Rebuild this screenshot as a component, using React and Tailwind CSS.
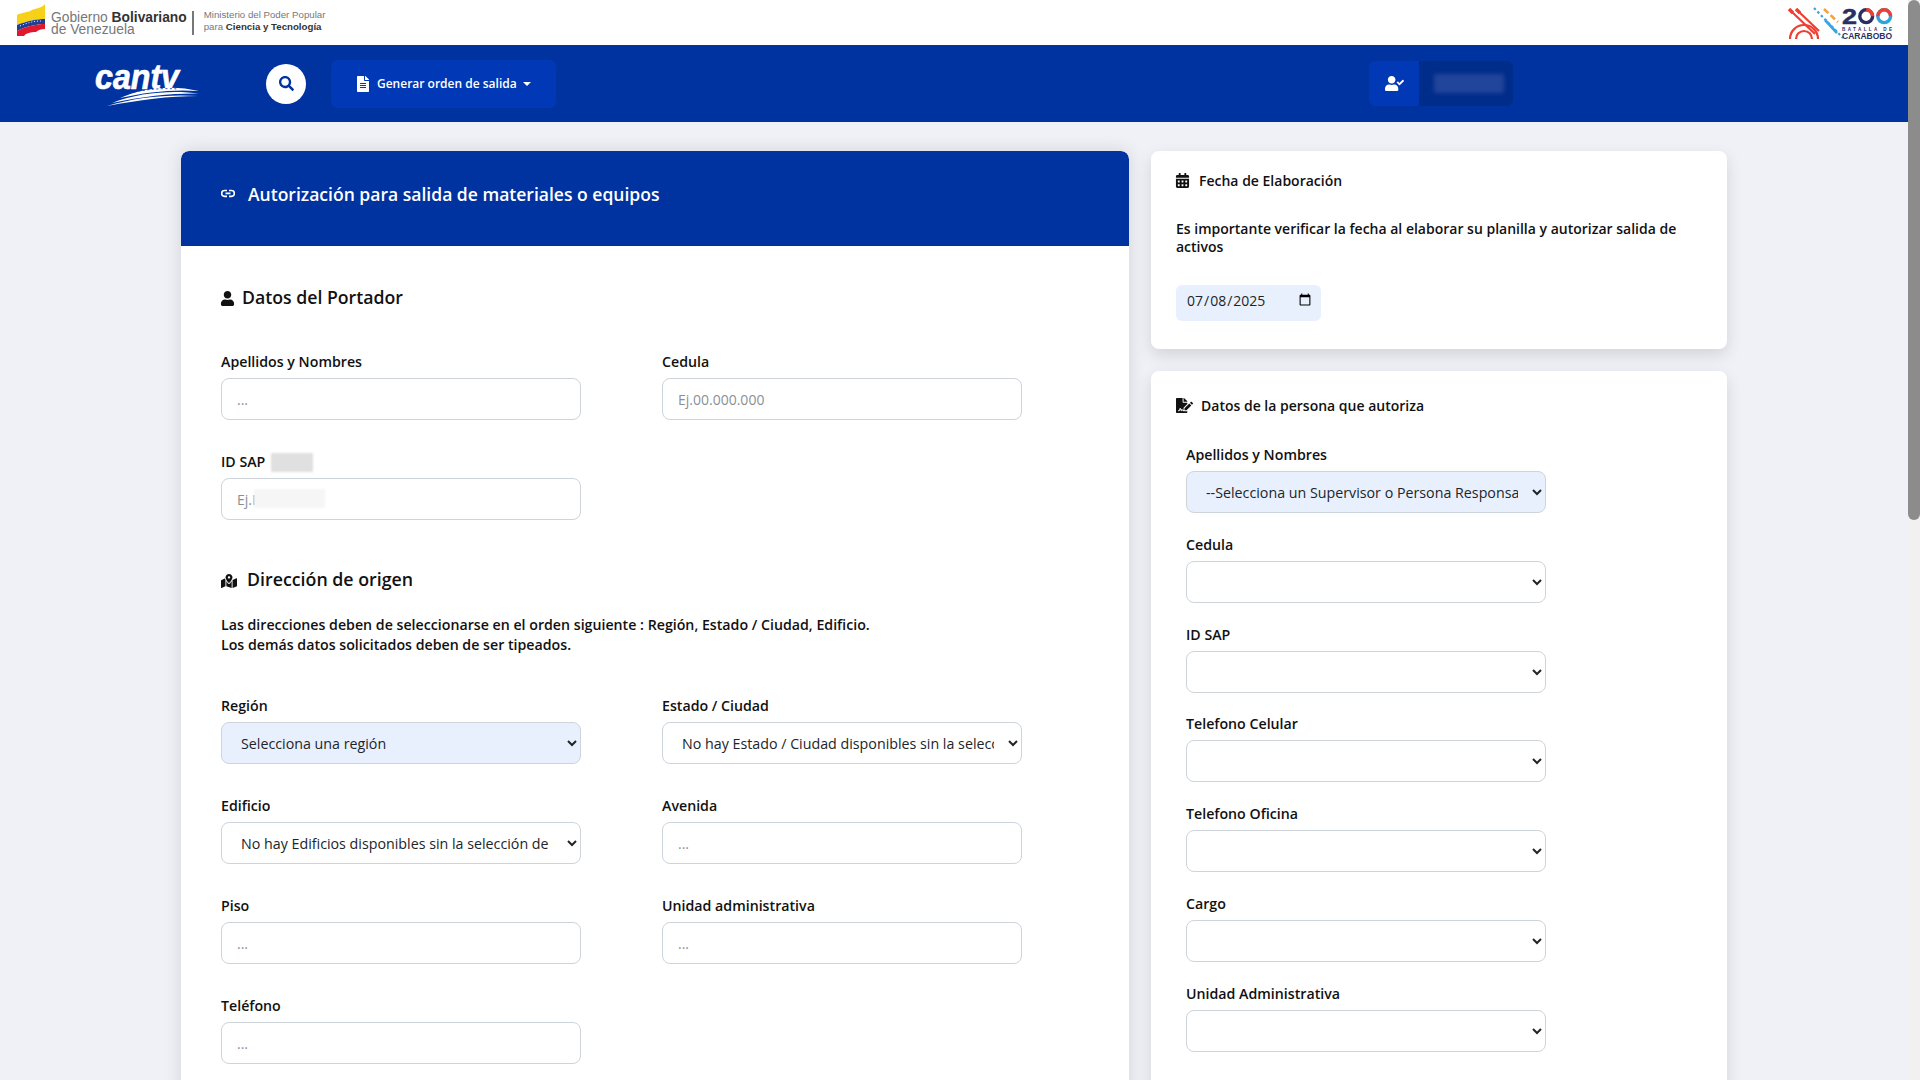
import React from "react";
import { FaCalendarAlt, FaFileAlt, FaFileSignature, FaMapMarkedAlt, FaSearch, FaUser, FaUserCheck } from "react-icons/fa";

const FONT = "font-['Open_Sans','Noto_Sans',sans-serif]";

function Label({ children }) {
  return <label className="block text-[14.200px] leading-[21px] font-semibold text-[#111] mb-[6px]">{children}</label>;
}

function TextField({ label, placeholder }) {
  return (
    <div className="w-[360px]">
      <Label>{label}</Label>
      <input readOnly placeholder={placeholder} className="block w-full h-[42px] px-[15px] rounded-[8px] border border-[#ced4da] bg-white text-[14px] text-[#333] placeholder:text-[#8a8f96] outline-none" />
    </div>
  );
}

function SelectField({ label, value, tinted }) {
  return (
    <div className="w-[360px]">
      <Label>{label}</Label>
      <select className={`block w-full h-[42px] pl-[15px] pr-[11px] rounded-[8px] border border-[#ced4da] text-[14.250px] text-[#212529] outline-none ${tinted ? "bg-[#e8f0fe]" : "bg-white"}`} style={{ appearance: "auto" }}>
        <option>{value ?? ""}</option>
      </select>
    </div>
  );
}

function GovLogo() {
  return (
    <div className="flex items-center">
      <svg width="29" height="33" viewBox="0 0 29 33" className="shrink-0 mb-[5px]">
        <path d="M0 11 C5 8 10 9 15 6 C20 4 25 4 28 0 L28 15 C20 15 10 17 0 21Z" fill="#f7d117" />
        <path d="M0 21 C10 17 20 15 28 15 L28 20 C20 20 10 22 0 27Z" fill="#1f3f93" />
        <path d="M0 27 C10 22 20 20 28 20 L28 25 C24 25 21 26 19 28 C14 28 9 29 7 32 L0 32Z" fill="#e0182d" />
        <path d="M3 22 C10 19 16 17 24 17" fill="none" stroke="#fff" strokeWidth="1" strokeDasharray="1 2" />
      </svg>
      <div className="ml-[5px] font-['Liberation_Sans',sans-serif] text-[13.800px] leading-[12px] text-[#777] whitespace-nowrap pt-[3px]">
        <div>Gobierno <b className="text-[#333]">Bolivariano</b></div>
        <div>de Venezuela</div>
      </div>
      <div className="ml-[5px] w-[2px] h-[24px] bg-[#777] shrink-0" />
      <div className="ml-[10px] mb-[3px] font-['Liberation_Sans',sans-serif] text-[9.700px] leading-[12.400px] text-[#777] whitespace-nowrap">
        <div>Ministerio del Poder Popular</div>
        <div>para <b className="text-[#333]">Ciencia y Tecnología</b></div>
      </div>
    </div>
  );
}

function BicentenarioLogo() {
  return (
    <svg width="106" height="33" viewBox="0 0 106 33" className="overflow-visible">
      <g stroke="#ee3f33" strokeWidth="2.200" fill="none">
        <path d="M3 5 L27 28" />
        <path d="M10 5 L31 25" />
        <path d="M2 33 A14 14 0 0 1 30 33" />
        <path d="M8 33 A8 8 0 0 1 24 33" />
      </g>
      <path d="M1 3 L5 7 M8 3 L12 7" stroke="#ee3f33" strokeWidth="3.400" />
      <path d="M26 2 L55 32" stroke="#3aa4dc" strokeWidth="2.200" strokeDasharray="2.500 2.500" fill="none" />
      <path d="M37 14 L49 27" stroke="#3aa4dc" strokeWidth="2.600" />
      <path d="M36 3 L50 16" stroke="#f4a13a" strokeWidth="2.600" strokeDasharray="6 3" />
      <text x="54" y="18" fontFamily="Liberation Sans" fontWeight="700" fontSize="22" textLength="15" lengthAdjust="spacingAndGlyphs" fill="#2a2f63" stroke="#2a2f63" strokeWidth="0.500">2</text>
      <circle cx="78.200" cy="10.200" r="6.400" fill="none" stroke="#2a2f63" strokeWidth="3.400" />
      <path d="M78.200 3.800 A6.400 6.400 0 0 1 84.600 10.200" fill="none" stroke="#ee3f33" strokeWidth="3.400" />
      <circle cx="96.200" cy="10.200" r="6.400" fill="none" stroke="#2aa6df" strokeWidth="3.400" />
      <path d="M89.800 10.200 A6.400 6.400 0 0 1 102.600 10.200" fill="none" stroke="#ee3f33" strokeWidth="3.400" />
      <text x="54" y="25" fontFamily="Liberation Sans" fontWeight="700" fontSize="4.600" textLength="50" fill="#2a2f63">BATALLA DE</text>
      <text x="54" y="32.500" fontFamily="Liberation Sans" fontWeight="700" fontSize="8.200" textLength="50" lengthAdjust="spacingAndGlyphs" fill="#2a2f63">CARABOBO</text>
    </svg>
  );
}

function CantvLogo() {
  return (
    <svg width="112" height="50" viewBox="0 0 112 50" className="overflow-visible">
      <text x="1" y="29.500" fontFamily="Liberation Sans" fontWeight="700" fontStyle="italic" fontSize="35" textLength="84" lengthAdjust="spacingAndGlyphs" fill="#fff" stroke="#fff" strokeWidth="0.700">cantv</text>
      <path d="M26 39 C50 28 80 26 105 32 C80 30 52 33 26 39Z" fill="#fff" />
      <path d="M18 44 C45 33 80 31 105 34.500 C80 34 50 37 18 44Z" fill="#fff" />
      <path d="M13 47 C42 38 75 35 104 37 C75 37 45 41 13 47Z" fill="#fff" />
      <path d="M40 33 C55 30 70 29 84 30" fill="none" stroke="#00339f" strokeWidth="0.800" strokeDasharray="2 2.500" />
    </svg>
  );
}

export default function App() {
  return (
    <div className={`flex h-screen overflow-hidden bg-[#eff1f6] ${FONT}`}>
      <div className="flex-1 min-w-0 overflow-hidden">
        <header className="h-[45px] bg-white flex items-center justify-between pl-[17px] pr-[14px]">
          <GovLogo />
          <BicentenarioLogo />
        </header>

        <nav className="h-[77px] bg-[#00339f] flex items-center">
          <div className="w-[266px] pl-[94px] flex shrink-0">
            <CantvLogo />
          </div>
          <div className="w-[40px] h-[40px] rounded-full bg-white flex items-center justify-center shrink-0 text-[#00339f]">
            <FaSearch size={15} />
          </div>
          <div className="ml-[25px] w-[225px] h-[48px] rounded-[6px] bg-[#0038b5] flex items-center pl-[24px] text-white text-[12px] font-semibold">
            <FaFileAlt size={16} className="mr-[6px]" />
            <span>Generar orden de salida</span>
            <span className="ml-[6px] w-0 h-0 border-x-[4px] border-x-transparent border-t-[4px] border-t-white" />
          </div>
          <div className="ml-[813px] flex h-[45px] w-[144px] rounded-[6px] overflow-hidden">
            <div className="w-[50px] bg-[#0038b5] flex items-center justify-center text-white">
              <FaUserCheck size={19} />
            </div>
            <div className="flex-1 bg-[#002c8a] flex items-center pl-[15px]">
              <div className="w-[70px] h-[19px] bg-[#21459b] blur-[2px]" />
            </div>
          </div>
        </nav>

        <main className="flex items-start pt-[29px] pl-[181px]">
          <section className="w-[948px] bg-white rounded-[8px] shadow-[0_0_18px_rgba(0,0,0,0.12)] overflow-hidden h-[1200px] shrink-0">
            <div className="h-[95px] bg-[#00339f] rounded-t-[8px] flex items-start pt-[30px] pl-[40px] text-white">
              <svg width="14" height="10" viewBox="0 0 14 10" fill="none" stroke="#fff" strokeWidth="1.700" className="mt-[8px] shrink-0"><path d="M6 1.500H3.500a2.900 2.900 0 0 0 0 5.800H6M8 1.500h2.500a2.900 2.900 0 0 1 0 5.800H8M4.500 4.400h5" /></svg>
              <h1 className="ml-[13px] text-[17.550px] leading-[27px] font-semibold">Autorización para salida de materiales o equipos</h1>
            </div>
            <div className="pl-[40px] pt-[38px]">
              <h2 className="flex items-center text-[17.700px] leading-[27px] font-semibold text-[#111]">
                <FaUser size={15} className="-ml-[1px] mr-[7px] mt-[2px] shrink-0" />
                Datos del Portador
              </h2>
              <div className="mt-[40px] flex gap-[81px]">
                <TextField label="Apellidos y Nombres" placeholder="..." />
                <TextField label="Cedula" placeholder="Ej.00.000.000" />
              </div>
              <div className="mt-[31px] relative">
                <TextField label="ID SAP" placeholder="Ej.I" />
                <div className="absolute left-[50px] top-[2px] w-[42px] h-[19px] bg-[#e0e0e0] blur-[1px]" />
                <div className="absolute left-[33px] top-[38px] w-[71px] h-[19px] bg-[#f6f6f6] blur-[1px]" />
              </div>
              <h2 className="mt-[46px] flex items-center text-[17.800px] leading-[27px] font-semibold text-[#111]">
                <FaMapMarkedAlt size={16} className="mr-[10px] mt-[2px] shrink-0" />
                Dirección de origen
              </h2>
              <p className="mt-[22px] text-[14.200px] leading-[20px] font-semibold text-[#111]">
                Las direcciones deben de seleccionarse en el orden siguiente : Región, Estado / Ciudad, Edificio.<br />
                Los demás datos solicitados deben de ser tipeados.
              </p>
              <div className="mt-[40px] grid grid-cols-[360px_360px] gap-x-[81px] gap-y-[31px]">
                <SelectField label="Región" value="Selecciona una región" tinted />
                <SelectField label="Estado / Ciudad" value="No hay Estado / Ciudad disponibles sin la selección de una Región" />
                <SelectField label="Edificio" value="No hay Edificios disponibles sin la selección de un Estado" />
                <TextField label="Avenida" placeholder="..." />
                <TextField label="Piso" placeholder="..." />
                <TextField label="Unidad administrativa" placeholder="..." />
                <TextField label="Teléfono" placeholder="..." />
              </div>
            </div>
          </section>

          <aside className="ml-[22px] w-[576px] shrink-0 flex flex-col gap-[22px]">
            <div className="h-[198px] bg-white rounded-[8px] shadow-[0_6px_16px_rgba(0,0,0,0.12)] pl-[25px] pr-[40px] pt-[19px]">
              <h3 className="flex items-center text-[14px] leading-[21px] font-semibold text-[#111]">
                <FaCalendarAlt size={15} className="-ml-[1px] mr-[9px] shrink-0" />
                Fecha de Elaboración
              </h3>
              <p className="mt-[29px] text-[14px] leading-[18px] font-semibold text-[#111]">Es importante verificar la fecha al elaborar su planilla y autorizar salida de activos</p>
              <input type="date" defaultValue="2025-07-08" className="mt-[29px] block w-[145px] h-[36px] pl-[10px] pr-[7px] pb-[6px] rounded-[6px] bg-[#e8f0fe] text-[14px] text-[#212529] outline-none" />
            </div>
            <div className="h-[1000px] bg-white rounded-[8px] shadow-[0_6px_16px_rgba(0,0,0,0.12)] pl-[25px] pt-[24px]">
              <h3 className="flex items-center text-[14px] leading-[21px] font-semibold text-[#111]">
                <FaFileSignature size={17} className="mr-[8px] shrink-0" />
                Datos de la persona que autoriza
              </h3>
              <div className="ml-[10px] mt-[28px] flex flex-col gap-[20.830px]">
                <SelectField label="Apellidos y Nombres" value="--Selecciona un Supervisor o Persona Responsable" tinted />
                <SelectField label="Cedula" />
                <SelectField label="ID SAP" />
                <SelectField label="Telefono Celular" />
                <SelectField label="Telefono Oficina" />
                <SelectField label="Cargo" />
                <SelectField label="Unidad Administrativa" />
              </div>
            </div>
          </aside>
        </main>
      </div>
      <div className="w-[12px] shrink-0 bg-[#f1f1f1]">
        <div className="h-[520px] bg-[#8c8c8c] rounded-[6px]" />
      </div>
    </div>
  );
}
